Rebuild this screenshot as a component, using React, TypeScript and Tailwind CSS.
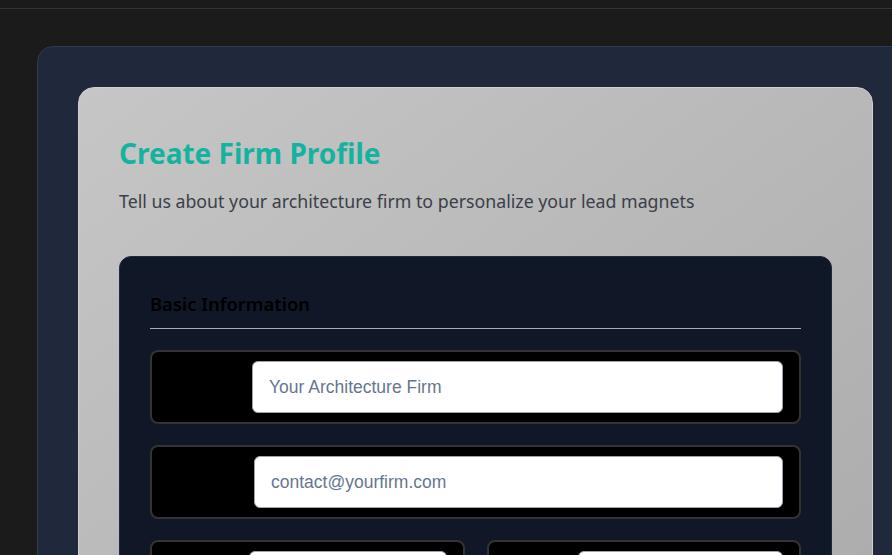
import React from "react";

function Field({ labelW, placeholder, label }: { labelW: string; placeholder: string; label: string }) {
  return (
    <div className="flex items-center rounded-lg border-2 border-[#333333] bg-black py-[9px] pl-4 pr-4">
      <label className={`${labelW} shrink-0 text-[16px] text-black`} style={{ fontFamily: '"Noto Sans", sans-serif' }}>
        {label}
      </label>
      <input
        className="h-[52px] min-w-0 flex-1 rounded-md border border-[#9ca3af] bg-white px-4 text-[17.5px] text-[#111827] outline-none placeholder:text-[#66768e]"
        style={{ fontFamily: '"Liberation Sans", Arial, sans-serif' }}
        placeholder={placeholder}
      />
    </div>
  );
}

export default function App() {
  return (
    <div className="h-[555px] w-[892px] overflow-hidden bg-[#1b1b1b]" style={{ fontFamily: '"Noto Sans", sans-serif' }}>
      <div className="h-[9px] border-b border-[#333333]" />
      <div className="pl-[37px] pt-[37px]">
        <div className="w-[877px] rounded-2xl border border-[#2e3b50] bg-[#1f293b] p-10">
          <div className="rounded-2xl border border-[#cfcfcf] bg-gradient-to-br from-[#c6c6c6] to-[#aaaaaa] p-10">
            <h1 className="mt-[8px] text-[28px] font-bold leading-[34px] text-[#14b3a0]">Create Firm Profile</h1>
            <p className="mt-[17px] text-[17.75px] leading-[28px] text-[#3a3f4a]">
              Tell us about your architecture firm to personalize your lead magnets
            </p>
            <div className="mt-[41px] rounded-xl border border-[#1e293b] bg-[#101828] px-[30px] pb-10 pt-[32px]">
              <h2 className="border-b border-[#a8adb5] pb-[9px] text-[18.4px] font-semibold leading-[30px] text-black">
                Basic Information
              </h2>
              <div className="mt-[21px] flex flex-col gap-[21px]">
                <Field labelW="w-[84px]" label="Firm Name" placeholder="Your Architecture Firm" />
                <Field labelW="w-[86px]" label="Email" placeholder="contact@yourfirm.com" />
                <div className="grid grid-cols-2 gap-[22px]">
                  <Field labelW="w-[81px]" label="Phone" placeholder="" />
                  <Field labelW="w-[73px]" label="Website" placeholder="" />
                </div>
              </div>
            </div>
          </div>
        </div>
      </div>
    </div>
  );
}
